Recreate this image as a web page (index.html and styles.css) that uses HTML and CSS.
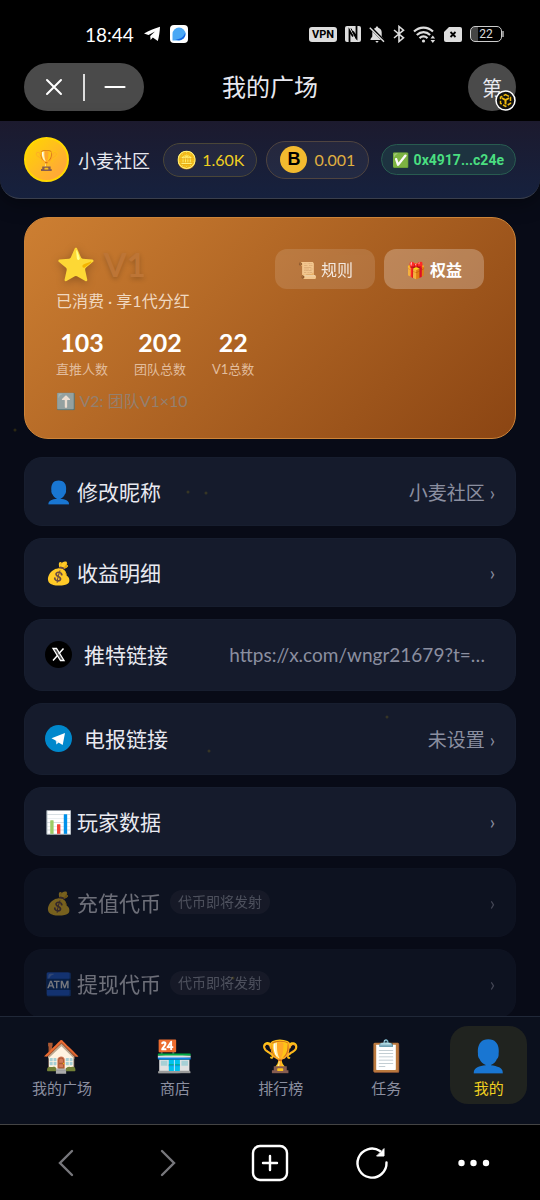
FILE: index.html
```html
<!DOCTYPE html>
<html lang="zh-CN">
<head>
  <meta charset="UTF-8">
  <meta name="viewport" content="width=device-width, initial-scale=1">
  <title>我的广场</title>
  <link rel="stylesheet" href="styles.css">
</head>
<body>
  <div class="statusbar">
    <div class="status-left">
      <span class="time">18:44</span>
      <svg width="18" height="16" viewBox="0 0 18 16"><path d="M1 7.500C6 5 11 2.500 17 .8 16.800 6 16 11 14.800 15L9.800 11.500 7.600 14 7.200 9.900 12 5.500 5.500 9z" fill="#fff"/></svg>
      <svg width="18" height="18" viewBox="0 0 18 18"><rect width="18" height="18" rx="4" fill="#fff"/><path d="M2.500 15.500V9A6.500 6.500 0 1 1 9 15.500z" fill="#4aa8f5"/><path d="M15.300 7.500C14 12 10 14.500 5 14.500c5 2.500 11.500-1 10.300-7z" fill="#1463e0"/></svg>
    </div>
    <div class="status-right">
      <span class="vpn">VPN</span>
      <svg width="16" height="16" viewBox="0 0 16 16"><rect width="16" height="16" rx="2" fill="#ddd"/><path d="M4.500 16V4.500L8 10.500M11.500 0v11.500L8 5.500" fill="none" stroke="#000" stroke-width="1.800"/><path d="M6 2.500l5.500 11" stroke="#000" stroke-width="1"/></svg>
      <svg width="16" height="17" viewBox="0 0 16 17"><path d="M8 .5c-.8 0-1.200.5-1.200 1.200C4.500 2.300 3.300 4 3.300 6.500v4L1.500 13v1h13v-1l-1.800-2.500v-4c0-2.500-1.200-4.200-3.500-4.800C9.200 1 8.800.5 8 .5zM6.500 15h3c-.5 2-2.500 2-3 0z" fill="#ddd"/><path d="M1.500 1.500l14 14" stroke="#000" stroke-width="3"/><path d="M.8 1.800l14.200 14" stroke="#ddd" stroke-width="1.500"/></svg>
      <svg width="12" height="18" viewBox="0 0 12 18"><path d="M1 5l9.500 7.800L6 16.500V1.500l4.500 3.700L1 13" fill="none" stroke="#ddd" stroke-width="1.600"/></svg>
      <svg width="23" height="17" viewBox="0 0 23 17"><path d="M1 5.500c5.500-5.300 13.500-5.300 19 0M3.800 9c4-3.800 9.500-3.800 13.300 0M6.500 12.200c2.500-2.200 5.500-2.200 8 0" fill="none" stroke="#ddd" stroke-width="2.200"/><circle cx="10.500" cy="15" r="1.600" fill="#ddd"/><path d="M17.500 12.500l2.300-3 2.300 3zM17.500 14l2.300 3 2.300-3z" fill="#ddd"/></svg>
      <svg width="18" height="15" viewBox="0 0 18 15"><path d="M5 0h11a2 2 0 0 1 2 2v11a2 2 0 0 1-2 2H2a2 2 0 0 1-2-2V5z" fill="#ddd"/><path d="M6.500 5l5 5m0-5l-5 5" stroke="#000" stroke-width="1.800"/></svg>
      <span class="battery">22</span>
    </div>
  </div>

  <div class="titlebar">
    <div class="capsule">
      <button aria-label="关闭"><svg width="18" height="18" viewBox="0 0 18 18"><path d="M2 2l14 14M16 2L2 16" stroke="#fff" stroke-width="2" stroke-linecap="round"/></svg></button>
      <button aria-label="最小化"><svg width="22" height="18" viewBox="0 0 22 18"><path d="M1.500 9h19" stroke="#fff" stroke-width="2.200" stroke-linecap="round"/></svg></button>
    </div>
    <h1>我的广场</h1>
    <button class="account">第
      <svg class="chain" width="21" height="21" viewBox="0 0 21 21"><circle cx="10.500" cy="10.500" r="9.500" fill="#111" stroke="#fff" stroke-width="1.500"/><path d="M10.500 4.500l5 2.800v6l-5 3-5-3v-6z" fill="none" stroke="#f0b90b" stroke-width="1.500" stroke-dasharray="4 1.500"/><path d="M7 8l3.500 2L14 8M10.500 10v4.500" fill="none" stroke="#f0b90b" stroke-width="2"/></svg>
    </button>
  </div>

  <header class="header">
    <div class="avatar">🏆</div>
    <span class="nick">小麦社区</span>
    <span class="chip chip-gold">🪙 <b>1.60K</b></span>
    <span class="chip chip-token"><i class="coin">B</i>0.001</span>
    <span class="chip chip-wallet">✅ 0x4917...c24e</span>
  </header>

  <main class="content">
    <section class="card">
      <div class="card-info">
        <div class="level"><span class="star">⭐</span><span class="level-name">V1</span></div>
        <p class="level-desc">已消费 · 享1代分红</p>
        <div class="stats">
          <div class="stat"><strong>103</strong><span>直推人数</span></div>
          <div class="stat"><strong>202</strong><span>团队总数</span></div>
          <div class="stat"><strong>22</strong><span>V1总数</span></div>
        </div>
        <p class="next"><span class="next-icon">⬆️</span> V2: 团队V1×10</p>
      </div>
      <div class="card-btns">
        <button class="rule">📜 规则</button>
        <button class="perk">🎁 权益</button>
      </div>
    </section>

    <div class="menu">
      <button class="item"><span class="emoji">👤</span><span class="label">修改昵称</span><span class="value">小麦社区 ›</span></button>
      <button class="item"><span class="emoji">💰</span><span class="label">收益明细</span><span class="value">›</span></button>
      <button class="item link">
        <svg class="logo" width="27" height="27" viewBox="0 0 27 27"><circle cx="13.500" cy="13.500" r="13.500" fill="#000"/><path d="M8 7.500h3.500l7.500 12h-3.500z" fill="#555" stroke="#fff" stroke-width="1.300"/><path d="M18.500 7.500l-4.800 5.300M12.500 14.500L8 19.500" stroke="#fff" stroke-width="1.500"/></svg>
        <span class="label">推特链接</span><span class="value url">https://x.com/wngr21679?t=…</span>
      </button>
      <button class="item link">
        <svg class="logo" width="27" height="27" viewBox="0 0 27 27"><circle cx="13.500" cy="13.500" r="13.500" fill="#0088cc"/><path d="M6.500 13.200L20 8l-2.300 12-4.200-2.500-2 2-.8-4z" fill="#fff"/><path d="M11 15.500l.5 3.500 1.200-2.200" fill="#b8d9ea"/></svg>
        <span class="label">电报链接</span><span class="value">未设置 ›</span>
      </button>
      <button class="item"><span class="emoji">📊</span><span class="label">玩家数据</span><span class="value">›</span></button>
      <button class="item" disabled><span class="emoji">💰</span><span class="label">充值代币</span><span class="soon">代币即将发射</span><span class="value">›</span></button>
      <button class="item" disabled><span class="emoji">🏧</span><span class="label">提现代币</span><span class="soon">代币即将发射</span><span class="value">›</span></button>
    </div>
  </main>

  <nav class="tabs">
    <a class="tab" href="#home"><span class="tab-icon">🏠</span>我的广场</a>
    <a class="tab" href="#shop"><span class="tab-icon">🏪</span>商店</a>
    <a class="tab" href="#rank"><span class="tab-icon">🏆</span>排行榜</a>
    <a class="tab" href="#task"><span class="tab-icon">📋</span>任务</a>
    <a class="tab active" href="#me"><span class="tab-icon">👤</span>我的</a>
  </nav>

  <div class="browserbar">
    <button aria-label="后退"><svg width="40" height="40" viewBox="0 0 40 40"><path d="M26 8L14 20l12 12" stroke="#77777c"/></svg></button>
    <button aria-label="前进"><svg width="40" height="40" viewBox="0 0 40 40"><path d="M14 8l12 12-12 12" stroke="#77777c"/></svg></button>
    <button aria-label="新标签"><svg width="40" height="40" viewBox="0 0 40 40"><rect x="3" y="3" width="34" height="34" rx="7" stroke="#fff"/><path d="M20 13v14M13 20h14" stroke="#fff"/></svg></button>
    <button aria-label="刷新"><svg width="40" height="40" viewBox="0 0 40 40"><path d="M34.500 19.500A14.500 14.500 0 1 1 28 8" stroke="#fff"/><path d="M32 6v7h-7z" fill="#fff" stroke="#fff" stroke-width="1"/></svg></button>
    <button aria-label="更多"><svg width="40" height="40" viewBox="0 0 40 40"><g fill="#fff"><circle cx="7.500" cy="20" r="3.200"/><circle cx="19.500" cy="20" r="3.200"/><circle cx="32" cy="20" r="3.200"/></g></svg></button>
  </div>

  <!-- floating background particles -->
  <svg class="particles" width="540" height="1200" aria-hidden="true">
    <g fill="#ffd700" opacity=".14">
      <circle cx="15" cy="430" r="1.500"/><circle cx="188" cy="492" r="1.500"/><circle cx="206" cy="493" r="1.500"/>
      <circle cx="387" cy="717" r="1.500"/><circle cx="209" cy="751" r="1.500"/><circle cx="233" cy="978" r="1.500"/>
    </g>
  </svg>
</body>
</html>
```
FILE: styles.css
```css
* {
  box-sizing: border-box;
  margin: 0;
  padding: 0;
}
body {
  display: flex;
  flex-direction: column;
  height: 100vh;
  overflow: hidden;
  background: #080b17;
  color: #e8e9f0;
  font-family: Lato, "Noto Sans CJK SC", "Noto Color Emoji", sans-serif;
}
button {
  border: none;
  background: none;
  color: inherit;
  font: inherit;
  cursor: pointer;
}
svg {
  display: block;
  flex: none;
}

/* phone status bar */
.statusbar {
  display: flex;
  justify-content: space-between;
  align-items: center;
  padding: 22px 38px 0 85px;
  background: #000;
}
.status-left, .status-right {
  display: flex;
  align-items: center;
  height: 24px;
}
.status-left {
  gap: 9px;
}
.status-right {
  gap: 8px;
}
.time {
  font-size: 19px;
  color: #fff;
}
.vpn {
  padding: 0 3px;
  border-radius: 3px;
  background: #ddd;
  color: #000;
  font: bold 11px/15px Roboto, sans-serif;
}
.battery {
  position: relative;
  width: 32px;
  border: 1px solid #ccc;
  border-radius: 5px;
  background: linear-gradient(90deg, #444 22%, #000 22%);
  color: #ddd;
  font: 12px/14px Roboto, sans-serif;
  text-align: center;
}
.battery::after {
  content: "";
  position: absolute;
  right: -3px;
  top: 4px;
  width: 2px;
  height: 6px;
  background: #888;
}

.titlebar {
  display: grid;
  grid-template-columns: 1fr auto 1fr;
  align-items: center;
  padding: 17px 24px 10px;
  background: #000;
}
.titlebar h1 {
  font-size: 24px;
  font-weight: normal;
  line-height: 48px;
}
.capsule {
  display: flex;
  align-items: center;
  width: 120px;
  height: 48px;
  border-radius: 24px;
  background: #4a4a4a;
}
.capsule button {
  display: flex;
  flex: 1;
  justify-content: center;
  align-items: center;
  height: 27px;
}
.capsule button + button {
  border-left: 2px solid #ddd;
}
.account {
  position: relative;
  justify-self: end;
  width: 48px;
  height: 48px;
  border-radius: 50%;
  background: #4a4a4a;
  font-size: 20px;
}
.chain {
  position: absolute;
  right: 0;
  bottom: 0;
}

/* user info */
.header {
  display: flex;
  align-items: center;
  gap: 9px;
  height: 78px;
  padding: 0 24px;
  border-bottom: 1px solid #3a3f4c;
  border-radius: 0 0 20px 20px;
  background: linear-gradient(180deg, #1c1a2e, #16213e);
  box-shadow: 0 4px 20px #0006;
}
.avatar {
  width: 45px;
  height: 45px;
  border: 2px solid #ffd700;
  border-radius: 50%;
  background: linear-gradient(135deg, #ffd700, #ff9f43);
  font-size: 20px;
  line-height: 41px;
  text-align: center;
}
.nick {
  margin-right: 4px;
  font-size: 18px;
  white-space: nowrap;
}
.chip {
  display: flex;
  align-items: center;
  flex: none;
  border: 1px solid #4a4638;
  border-radius: 20px;
  background: #ffffff0d;
  white-space: nowrap;
}
.chip-gold {
  gap: 5px;
  height: 34px;
  padding: 0 12px;
  color: #f0d020;
  font-size: 17px;
}
.chip-gold b {
  font-size: 16px;
  font-weight: normal;
}
.chip-token {
  gap: 7px;
  height: 38px;
  padding: 0 13px;
  border-color: #4f4440;
  color: #e0b040;
  font-size: 16px;
}
.coin {
  width: 27px;
  height: 27px;
  border-radius: 50%;
  background: #f3ba2f;
  color: #000;
  font: bold 18px/27px "Liberation Sans", sans-serif;
  text-align: center;
}
.chip-wallet {
  height: 31px;
  margin-left: auto;
  padding: 0 11px;
  border-color: #285c50;
  background: #1d3340;
  color: #4ade80;
  font: bold 14px Roboto, "Noto Color Emoji", sans-serif;
}

.content {
  display: flex;
  flex: 1;
  flex-direction: column;
  gap: 18px;
  min-height: 0;
  overflow-y: auto;
  padding: 18px 24px 0;
  scrollbar-width: none;
}

/* level card */
.card {
  display: flex;
  flex: none;
  justify-content: space-between;
  align-items: flex-start;
  padding: 31px 31px 26px;
  border: 1px solid #cd8438;
  border-radius: 24px;
  background: linear-gradient(135deg, #cd7f32, #8b4513);
}
.level {
  display: flex;
  align-items: center;
  gap: 8px;
  height: 30px;
}
.star {
  font-size: 32px;
  filter: drop-shadow(0 2px 4px #0004);
}
.level-name {
  color: #bd7536;
  font-size: 33px;
  font-weight: bold;
  text-shadow: 0 2px 5px #0003;
}
.level-desc {
  margin-top: 11px;
  color: #f0d8c0;
  font-size: 16px;
  line-height: 22px;
}
.stats {
  display: flex;
  gap: 26px;
  margin-top: 17px;
}
.stat {
  display: flex;
  flex-direction: column;
  gap: 4px;
  text-align: center;
}
.stat strong {
  color: #fff;
  font-size: 25px;
  line-height: 26px;
}
.stat span {
  color: #e2bd9d;
  font-size: 13px;
  line-height: 20px;
}
.next {
  margin-top: 11px;
  color: #94806f;
  font-size: 16px;
  line-height: 22px;
}
.next-icon {
  opacity: .8;
}
.card-btns {
  display: flex;
  gap: 9px;
}
.card-btns button {
  width: 100px;
  height: 40px;
  border-radius: 12px;
  color: #fff;
  font-size: 16px;
}
.rule {
  background: #ffffff26;
  opacity: .85;
}
.perk {
  background: #ffffff40;
  font-weight: bold;
}

/* settings list */
.menu {
  display: flex;
  flex-direction: column;
  gap: 12px;
}
.item {
  display: flex;
  flex: none;
  align-items: center;
  height: 69px;
  padding: 0 20px 1px;
  border: 1px solid #171e2f;
  border-radius: 18px;
  background: #151b2c;
  text-align: left;
}
.item.link {
  height: 72px;
  padding-bottom: 2px;
}
.emoji {
  width: 32px;
  font-size: 22px;
}
.logo {
  margin-right: 12px;
}
.label {
  flex: none;
  font-size: 21px;
}
.value {
  margin-left: auto;
  color: #8b8fa0;
  font-size: 19px;
}
.url {
  margin-right: 10px;
  overflow: hidden;
  text-overflow: ellipsis;
  white-space: nowrap;
}
.soon {
  margin-left: 9px;
  padding: 0 8px;
  border-radius: 12px;
  background: #ffffff14;
  color: #a0a3b0;
  font-size: 14px;
  line-height: 24px;
}
.item:disabled {
  opacity: .45;
}

/* bottom tabs */
.tabs {
  display: flex;
  flex: none;
  justify-content: space-around;
  padding: 9px 0 20px;
  border-top: 1px solid #202838;
  background: #0b101d;
}
.tab {
  display: flex;
  flex-direction: column;
  align-items: center;
  gap: 2px;
  padding: 8px 19px 6px;
  border-radius: 18px;
  color: #8b8fa0;
  font-size: 15px;
  line-height: 20px;
  text-decoration: none;
}
.tab-icon {
  font-size: 31px;
  line-height: 42px;
}
.tab.active {
  background: #20231f;
  color: #f0d020;
}

/* browser controls */
.browserbar {
  display: flex;
  flex: none;
  height: 76px;
  padding: 0 15px;
  border-top: 1px solid #444;
  background: #000;
}
.browserbar button {
  display: flex;
  flex: 1;
  justify-content: center;
  align-items: center;
}
.browserbar svg {
  fill: none;
  stroke-width: 2.4;
  stroke-linecap: round;
}

.particles {
  position: absolute;
  left: 0;
  top: 0;
  pointer-events: none;
}
```
